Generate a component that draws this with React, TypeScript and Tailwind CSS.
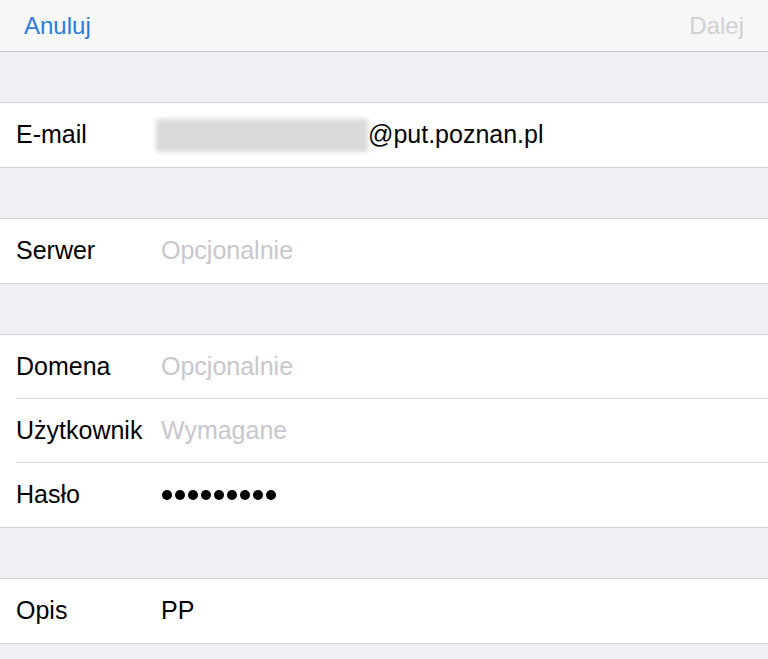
import React from "react"

type Row = { label: string; value?: React.ReactNode; placeholder?: string }

const groups: Row[][] = [
  [{ label: "E-mail", value: "email" }],
  [{ label: "Serwer", placeholder: "Opcjonalnie" }],
  [
    { label: "Domena", placeholder: "Opcjonalnie" },
    { label: "Użytkownik", placeholder: "Wymagane" },
    { label: "Hasło", value: "password" },
  ],
  [{ label: "Opis", value: "PP" }],
]

function Value({ row }: { row: Row }) {
  if (row.value === "email") {
    return (
      <div className="flex items-center">
        <div className="-ml-[5px] h-[33px] w-[212px] bg-[#dadada] blur-[2px]" />
        <span className="text-black">@put.poznan.pl</span>
      </div>
    )
  }
  if (row.value === "password") {
    return (
      <div className="flex items-center gap-[3px] pl-[1px]">
        {Array.from({ length: 9 }).map((_, i) => (
          <span key={i} className="block h-[10px] w-[10px] rounded-full bg-black" />
        ))}
      </div>
    )
  }
  if (row.placeholder) {
    return <span className="text-[#c7c7cd]">{row.placeholder}</span>
  }
  return <span className="text-black">{row.value}</span>
}

export default function App() {
  return (
    <div className="h-[659px] w-[768px] overflow-hidden bg-[#efeff4] font-['Liberation_Sans',Arial,sans-serif] text-[25px]">
      <div className="flex h-[52px] items-center justify-between border-b border-[#c4c4c8] bg-[#f7f7f8] px-6 text-[24px]">
        <span className="text-[#2b7ddb]">Anuluj</span>
        <span className="text-[#d0d0d4]">Dalej</span>
      </div>

      {groups.map((rows, gi) => (
        <div key={gi} className="mt-[50px] border-y border-[#d2d2d6] bg-white">
          {rows.map((row, ri) => (
            <div key={row.label} className="pl-4">
              <div
                className={
                  "flex h-16 items-center " +
                  (ri < rows.length - 1 ? "border-b border-[#d6d6da]" : "")
                }
              >
                <span className="w-[145px] shrink-0 text-black">{row.label}</span>
                <Value row={row} />
              </div>
            </div>
          ))}
        </div>
      ))}
    </div>
  )
}
